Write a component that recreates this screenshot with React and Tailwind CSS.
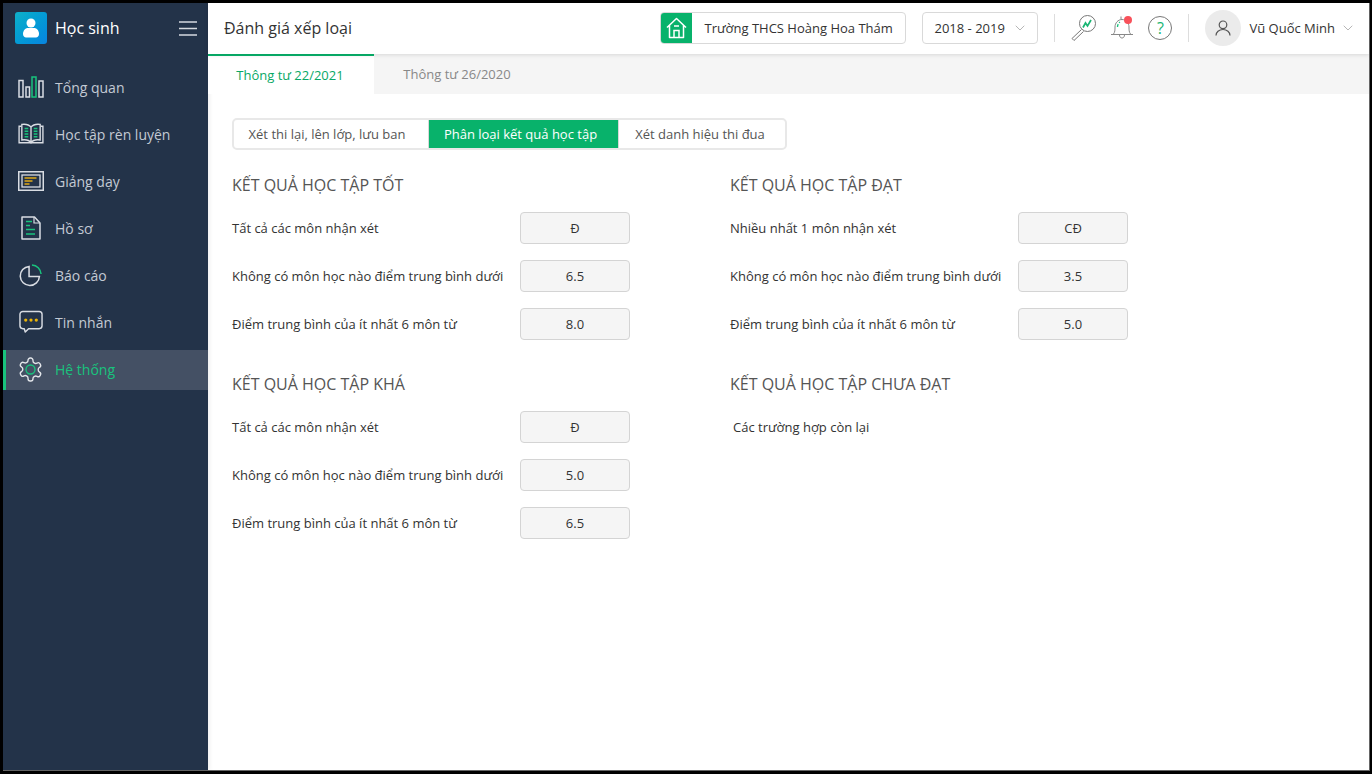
import React from "react";
import { ChevronDown } from "lucide-react";

const W = "#d9dde3";
const G = "#19c37d";

const Chart = () => (
  <svg width="26" height="22" viewBox="0 0 26 22" fill="none" strokeWidth="1.500">
    <rect x="1" y="4.500" width="4" height="16.500" stroke={W} />
    <rect x="8" y="11" width="3.500" height="10" stroke={W} />
    <rect x="14" y="1" width="4" height="20" stroke={G} />
    <rect x="21" y="5" width="4" height="16" stroke={W} />
  </svg>
);
const Book = () => (
  <svg width="26" height="22" viewBox="0 0 28 24" fill="none" strokeWidth="1.500">
    <path d="M3.500 3.500H1v18h26v-18h-2.500" stroke={W} />
    <path d="M14 4.500C12 2 8 1 4 1.500V18.500c4-.5 8 0 10 3 2-3 6-3.500 10-3V1.500C20 1 16 2 14 4.500V22" stroke={W} />
    <path d="M7 6h4M7 9h4M7 12h4M7 15h4M17 6h4M17 9h4M17 12h4M17 15h4" stroke={G} strokeWidth="1.800" />
  </svg>
);
const Board = () => (
  <svg width="26" height="20" viewBox="0 0 26 20" fill="none">
    <rect x="0.750" y="0.750" width="24.500" height="18.500" stroke={W} strokeWidth="1.500" />
    <rect x="4" y="4" width="18" height="12" stroke={W} strokeWidth="1.300" />
    <path d="M6.500 7h12M6.500 10h8M6.500 13h5" stroke="#e0a917" strokeWidth="1.600" />
  </svg>
);
const Doc = () => (
  <svg width="20" height="24" viewBox="0 0 20 24" fill="none">
    <path d="M1 1h12.500L19 7v16H1z" stroke={W} strokeWidth="1.500" strokeLinejoin="round" />
    <path d="M13 1v6h6" stroke={W} strokeWidth="1.200" />
    <path d="M5 5.500h6M5 9.500h4M5 13.500h9M5 18h9" stroke={G} strokeWidth="1.500" />
  </svg>
);
const Pie = () => (
  <svg width="23" height="23" viewBox="0 0 24 24" fill="none" strokeWidth="1.600">
    <path d="M10.500 2.500a10 10 0 1 0 10.800 10.500H10.500z" stroke={W} />
    <path d="M13.500 1a10 10 0 0 1 9.500 9.500" stroke={G} />
  </svg>
);
const Chat = () => (
  <svg width="24" height="24" viewBox="0 0 25 24" fill="none">
    <path d="M4 1h17a3 3 0 0 1 3 3v12a3 3 0 0 1-3 3H10l-3.500 3.500L5.500 19H4a3 3 0 0 1-3-3V4a3 3 0 0 1 3-3z" stroke={W} strokeWidth="1.500" strokeLinejoin="round" />
    <circle cx="7" cy="10" r="1.700" fill="#eab308" />
    <circle cx="12.500" cy="10" r="1.700" fill="#eab308" />
    <circle cx="18" cy="10" r="1.700" fill="#eab308" />
  </svg>
);
const Gear = () => (
  <svg width="27" height="27" viewBox="0 0 24 24" fill="none">
    <path d="M12.220 1.800h-.44a2 2 0 0 0-2 2v.18a2 2 0 0 1-1 1.730l-.43.250a2 2 0 0 1-2 0l-.15-.080a2 2 0 0 0-2.730.730l-.220.380a2 2 0 0 0 .730 2.730l.150.100a2 2 0 0 1 1 1.720v.510a2 2 0 0 1-1 1.740l-.150.090a2 2 0 0 0-.730 2.730l.220.380a2 2 0 0 0 2.730.730l.150-.080a2 2 0 0 1 2 0l.430.250a2 2 0 0 1 1 1.730V20.200a2 2 0 0 0 2 2h.44a2 2 0 0 0 2-2v-.18a2 2 0 0 1 1-1.730l.430-.250a2 2 0 0 1 2 0l.150.080a2 2 0 0 0 2.730-.730l.220-.390a2 2 0 0 0-.730-2.730l-.150-.080a2 2 0 0 1-1-1.740v-.500a2 2 0 0 1 1-1.740l.150-.090a2 2 0 0 0 .730-2.730l-.220-.380a2 2 0 0 0-2.730-.730l-.150.080a2 2 0 0 1-2 0l-.430-.250a2 2 0 0 1-1-1.730V3.800a2 2 0 0 0-2-2z" stroke="#e4e7eb" strokeWidth="1.200" />
    <circle cx="12" cy="12" r="4" stroke={G} strokeWidth="1.200" />
  </svg>
);

const navItems = [
  ["Tổng quan", Chart],
  ["Học tập rèn luyện", Book],
  ["Giảng dạy", Board],
  ["Hồ sơ", Doc],
  ["Báo cáo", Pie],
  ["Tin nhắn", Chat],
  ["Hệ thống", Gear, true],
];

function NavItem({ label, Icon, active }) {
  return (
    <div className={`flex h-[40px] mb-[7px] pb-[2px] items-center ${active ? "bg-[#445064] border-l-[3px] border-[#19c37d]" : "pl-[3px]"}`}>
      <div className="w-[49px] flex justify-center shrink-0">
        <Icon />
      </div>
      <span className={`text-[14px] ${active ? "text-[#19c37d]" : "text-[#c3cad4]"}`}>{label}</span>
    </div>
  );
}

function Sidebar() {
  return (
    <aside className="relative w-[205px] shrink-0 bg-[#233349] flex flex-col shadow-[2px_0_4px_rgba(0,0,0,0.06)]">
      <div className="h-[50px] flex items-center pl-[12px] pr-[11px]">
        <div className="w-[32px] h-[32px] rounded-[3px] bg-gradient-to-br from-[#10b0c8] to-[#0a84e0] flex items-center justify-center">
          <svg width="18" height="20" viewBox="0 0 18 20" fill="white">
            <circle cx="9" cy="5" r="4.500" />
            <path d="M1 16c0-4 3-6 4.500-6h7c1.500 0 4.500 2 4.500 6 0 2-1.500 3.500-3 3.500H4C2.500 19.500 1 18 1 16z" />
          </svg>
        </div>
        <span className="ml-[8px] text-[16px] text-white flex-1">Học sinh</span>
        <svg width="18" height="15" viewBox="0 0 18 15" stroke="#d5d9df" strokeWidth="1.500">
          <path d="M0 1h18M0 7.500h18M0 14h18" />
        </svg>
      </div>
      <nav className="mt-[15px] flex flex-col">
        {navItems.map(([label, Icon, active]) => (
          <NavItem key={label} label={label} Icon={Icon} active={active} />
        ))}
      </nav>
    </aside>
  );
}

function Header() {
  return (
    <header className="relative z-10 h-[51px] shrink-0 bg-white shadow-[0_1px_4px_rgba(0,0,0,0.12)] flex items-center pl-[16px] pr-[13px] pb-[1px]">
      <h1 className="text-[16px] text-[#333] flex-1 font-normal">Đánh giá xếp loại</h1>
      <div className="flex h-[32px] w-[246px] rounded-[4px] border border-[#d9d9d9] overflow-hidden">
        <div className="w-[32px] -ml-px -my-px h-[32px] bg-[#08b26b] flex items-center justify-center shrink-0">
          <svg width="21" height="22" viewBox="0 0 21 22" fill="none" stroke="white" strokeWidth="1.500">
            <path d="M1 10.500 10.500 1.500 20 10.500M3.500 8.500V20.500h14V8.500" strokeLinejoin="round" />
            <path d="M8 20.500v-7h5v7M8 9h5" />
          </svg>
        </div>
        <span className="text-[13px] text-[#333] ml-[12px] leading-[30px] whitespace-nowrap">Trường THCS Hoàng Hoa Thám</span>
      </div>
      <div className="ml-[16px] w-[116px] h-[32px] rounded-[4px] border border-[#d9d9d9] flex items-center pl-[11px] pr-[9px] justify-between">
        <span className="text-[13px] text-[#333] pt-[2px]">2018 - 2019</span>
        <ChevronDown size={16} strokeWidth={1.300} className="text-[#aaa]" />
      </div>
      <div className="ml-[16px] w-px h-[28px] bg-[#ddd]" />
      <div className="ml-[16px] w-[25px] h-[26px]">
        <svg width="25" height="26" viewBox="0 0 25 26" fill="none">
          <circle cx="16.500" cy="8.500" r="8" stroke="#777" strokeWidth="1" />
          <path d="M10.500 14.500 1 23.500l2 2 9.500-9" stroke="#777" strokeWidth="1" />
          <path d="M12 12.500l2.500-4.500 2 3 3.500-6" stroke="#19b573" strokeWidth="1.700" />
        </svg>
      </div>
      <div className="relative ml-[14px] w-[24px] h-[26px]">
        <svg width="24" height="26" viewBox="0 0 24 26" fill="none" stroke="#888" strokeWidth="1">
          <path d="M1 19.500h22M3.500 19c1.500-2 1.500-4 1.500-7 0-4 3-7.500 7-7.500 4 0 7 3.500 7 7.500 0 3 0 5 1.500 7M9.500 20c0 4 5 4 5 0M11 4.500V1.500" />
          <path d="M7.500 12c0-2 1-4 2.500-5" stroke="#19c37d" strokeWidth="1.300" strokeDasharray="3 1.500" />
        </svg>
        <span className="absolute right-[2px] top-[1px] w-[8px] h-[8px] rounded-full bg-[#f8515a]" />
      </div>
      <div className="ml-[14px] w-[24px] h-[24px] rounded-full border border-[#777] flex items-center justify-center text-[16px] text-[#19b573]">?</div>
      <div className="ml-[16px] w-px h-[28px] bg-[#ddd]" />
      <div className="ml-[16px] w-[36px] h-[36px] rounded-full bg-[#ebebeb] flex items-center justify-center">
        <svg width="16" height="16" viewBox="0 0 16 16" fill="none" stroke="#555" strokeWidth="1.200">
          <circle cx="8" cy="4.800" r="3.800" />
          <path d="M1 15.500c0-3.500 3-6 7-6s7 2.500 7 6" />
        </svg>
      </div>
      <span className="ml-[8px] pt-[2px] text-[13px] text-[#333] whitespace-nowrap">Vũ Quốc Minh</span>
      <ChevronDown size={16} strokeWidth={1.300} className="ml-[5px] text-[#aaa]" />
    </header>
  );
}

function Row({ label, value }) {
  return (
    <div className="flex items-center h-[32px] mb-[16px]">
      <span className="w-[288px] pt-[2px] text-[13px] text-[#333] whitespace-nowrap">{label}</span>
      <div className="w-[110px] h-[32px] pt-[1px] rounded-[4px] border border-[#d4d4d4] bg-[#f5f5f5] flex items-center justify-center text-[13px] text-[#333]">{value}</div>
    </div>
  );
}

function Section({ title, rows, note }) {
  return (
    <section className="h-[199px]">
      <h2 className="h-[36px] text-[16px] leading-[22px] font-normal text-[#555]">{title}</h2>
      <div className="mt-[2px]">
        {note ? (
          <div className="h-[32px] flex items-center pl-[3px] pt-[2px] text-[13px] text-[#333]">{note}</div>
        ) : (
          rows.map(([l, v]) => <Row key={l} label={l} value={v} />)
        )}
      </div>
    </section>
  );
}

const rows = (a, b, c, first = "Tất cả các môn nhận xét") => [
  [first, a],
  ["Không có môn học nào điểm trung bình dưới", b],
  ["Điểm trung bình của ít nhất 6 môn từ", c],
];

export default function App() {
  return (
    <div
      className="w-[1372px] h-[774px] bg-black pt-[3px] pl-[3px] pr-[2px] pb-[3px] overflow-hidden"
      style={{ fontFamily: '"Open Sans", sans-serif' }}
    >
      <div className="flex h-full bg-white border-r border-b border-[#666]">
        <Sidebar />
        <main className="flex-1 flex flex-col min-w-0">
          <Header />
          <div className="relative z-[5] h-[40px] shrink-0 bg-[#f5f5f5] flex">
            <div className="w-[166px] bg-white border-t-2 border-[#08b26b] flex items-center justify-center pr-[2px] pt-[1px] text-[13px] text-[#08a866]">Thông tư 22/2021</div>
            <div className="w-[166px] flex items-center justify-center pt-[2px] text-[13px] text-[#888]">Thông tư 26/2020</div>
          </div>
          <div className="pl-[24px] pt-[24px] flex-1">
            <div className="flex w-[555px] h-[32px] rounded-[5px] border-2 border-[#e8e8e8] overflow-hidden text-[13px]">
              <div className="w-[194px] flex items-center justify-center pr-[8px] pt-[2px] text-[#555]">Xét thi lại, lên lớp, lưu ban</div>
              <div className="w-[191px] flex items-center justify-center pr-[6px] pt-[2px] text-white bg-[#08b26b] border-x border-[#d8d8d8]">Phân loại kết quả học tập</div>
              <div className="flex-1 flex items-center justify-center pr-[4px] pt-[2px] text-[#555]">Xét danh hiệu thi đua</div>
            </div>
            <div className="grid grid-cols-[498px_498px] mt-[24px]">
              <Section title="KẾT QUẢ HỌC TẬP TỐT" rows={rows("Đ", "6.5", "8.0")} />
              <Section title="KẾT QUẢ HỌC TẬP ĐẠT" rows={rows("CĐ", "3.5", "5.0", "Nhiều nhất 1 môn nhận xét")} />
              <Section title="KẾT QUẢ HỌC TẬP KHÁ" rows={rows("Đ", "5.0", "6.5")} />
              <Section title="KẾT QUẢ HỌC TẬP CHƯA ĐẠT" note="Các trường hợp còn lại" />
            </div>
          </div>
        </main>
      </div>
    </div>
  );
}
